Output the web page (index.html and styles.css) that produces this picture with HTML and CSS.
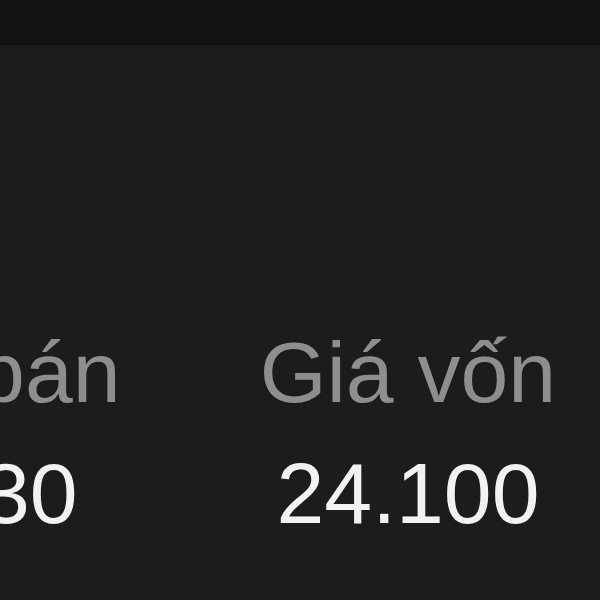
FILE: index.html
```html
<!DOCTYPE html>
<html lang="vi">
<head>
    <meta charset="UTF-8">
    <meta name="viewport" content="width=device-width, initial-scale=1.0">
    <title>Chi tiết hàng hóa</title>
    <link rel="stylesheet" href="styles.css">
</head>
<body>
    <div class="top-bar"></div>

    <div class="content">
        <div class="price-row">
            <div class="price-item">
                <p class="price-label">Giá bán</p>
                <p class="price-value">5.930</p>
            </div>
            <div class="price-item">
                <p class="price-label">Giá vốn</p>
                <p class="price-value">24.100</p>
            </div>
        </div>
    </div>
</body>
</html>
```

FILE: styles.css
```css
body {
    font-family: 'Liberation Sans', Arial, sans-serif;
    background-color: #1c1c1e;
    margin: 0;
    padding: 0;
    height: 600px;
    overflow: hidden;
}

.top-bar {
    height: 45px;
    background-color: #141314;
}

.content {
    padding-top: 279px;
}

.price-row {
    display: flex;
    margin-left: -249px;
}

.price-item {
    width: 438px;
    flex-shrink: 0;
    text-align: center;
}

.price-label {
    margin: 0;
    font-size: 86px;
    line-height: 96px;
    color: #8e8e90;
}

.price-value {
    margin: 25px 0 0;
    font-size: 86px;
    line-height: 96px;
    color: #f2f2f4;
}
```
